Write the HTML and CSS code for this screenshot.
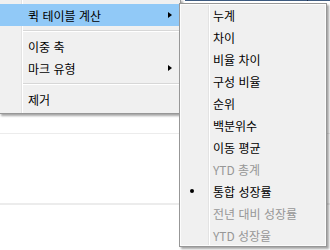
FILE: index.html
```html
<!DOCTYPE html>
<html lang="ko">
<head>
    <meta charset="UTF-8">
    <title>퀵 테이블 계산</title>
    <link rel="stylesheet" href="styles.css">
</head>
<body>
    <div class="sheet">
        <div class="topline">
            <span class="seg wide"></span>
            <span class="seg cut"></span>
            <span class="seg rest"></span>
        </div>
        <div class="row first"></div>
        <div class="row second"></div>
        <div class="row third"></div>
    </div>

    <div class="menu main-menu">
        <div class="item hot">
            <span class="label">퀵 테이블 계산</span>
            <span class="arrow"></span>
        </div>
        <div class="sep"></div>
        <div class="item"><span class="label">이중 축</span></div>
        <div class="item">
            <span class="label">마크 유형</span>
            <span class="arrow"></span>
        </div>
        <div class="sep"></div>
        <div class="item"><span class="label">제거</span></div>
    </div>

    <div class="menu sub-menu">
        <div class="item"><span class="check"></span><span class="label">누계</span></div>
        <div class="item"><span class="check"></span><span class="label">차이</span></div>
        <div class="item"><span class="check"></span><span class="label">비율 차이</span></div>
        <div class="item"><span class="check"></span><span class="label">구성 비율</span></div>
        <div class="item"><span class="check"></span><span class="label">순위</span></div>
        <div class="item"><span class="check"></span><span class="label">백분위수</span></div>
        <div class="item"><span class="check"></span><span class="label">이동 평균</span></div>
        <div class="item off"><span class="check"></span><span class="label">YTD 총계</span></div>
        <div class="item"><span class="check"><span class="dot"></span></span><span class="label">통합 성장률</span></div>
        <div class="item off"><span class="check"></span><span class="label">전년 대비 성장률</span></div>
        <div class="item off"><span class="check"></span><span class="label">YTD 성장율</span></div>
    </div>
</body>
</html>
```

FILE: styles.css
```css
body {
    margin: 0;
    padding: 0;
    background-color: #ffffff;
    font-family: "Noto Sans CJK KR", "Noto Sans", sans-serif;
    font-size: 12px;
    color: #000000;
}
.sheet {
    width: 330px;
    height: 250px;
    overflow: hidden;
}
.topline {
    display: flex;
    height: 1px;
    margin-left: 185px;
}
.seg.wide {
    width: 122px;
    background-color: #3e5b80;
}
.seg.cut {
    width: 1px;
    background-color: #1c2c44;
}
.seg.rest {
    flex: 1;
    background-color: #3e5b80;
}
.row {
    border-bottom: 1px solid #ececec;
}
.row.first {
    height: 132px;
}
.row.second {
    height: 69px;
}

/* menus sit over the sheet */
.menu {
    position: absolute;
    background-color: #f0f0f0;
    border: 1px solid #979797;
    box-shadow: 2px 2px 2px rgba(0, 0, 0, 0.35);
}
.main-menu {
    left: -1px;
    top: -1px;
    width: 180px;
    padding: 4px 0 3px 0;
    background-image: linear-gradient(to right,
        #f0f0f0 21px, #e3e3e3 21px, #e3e3e3 22px,
        #ffffff 22px, #ffffff 23px, #f0f0f0 23px);
}
.sub-menu {
    left: 179px;
    top: 3px;
    width: 146px;
    box-shadow: inset 0 0 0 1px #fcfcfc, 2px 2px 2px rgba(0, 0, 0, 0.35);
    background-image: linear-gradient(to right,
        #f0f0f0 28px, #e3e3e3 28px, #e3e3e3 29px,
        #ffffff 29px, #ffffff 30px, #f0f0f0 30px);
}
.item {
    display: flex;
    align-items: center;
    height: 22px;
    white-space: nowrap;
}
.main-menu .item {
    padding: 0 8px 0 28px;
}
.main-menu .label {
    flex: 1;
}
.item.hot {
    background-color: #91c9f7;
}
.item.off {
    color: #979797;
}
.arrow {
    width: 0;
    height: 0;
    border-style: solid;
    border-width: 3.5px 0 3.5px 4px;
    border-color: transparent transparent transparent #000000;
}
.sep {
    height: 1px;
    margin: 4px 0 3px 23px;
    background-color: #d7d7d7;
    border-bottom: 1px solid #ffffff;
}
.check {
    display: flex;
    justify-content: center;
    width: 24px;
}
.dot {
    width: 4px;
    height: 4px;
    border-radius: 50%;
    background-color: #000000;
}
.sub-menu .label {
    margin-left: 9px;
}
```
